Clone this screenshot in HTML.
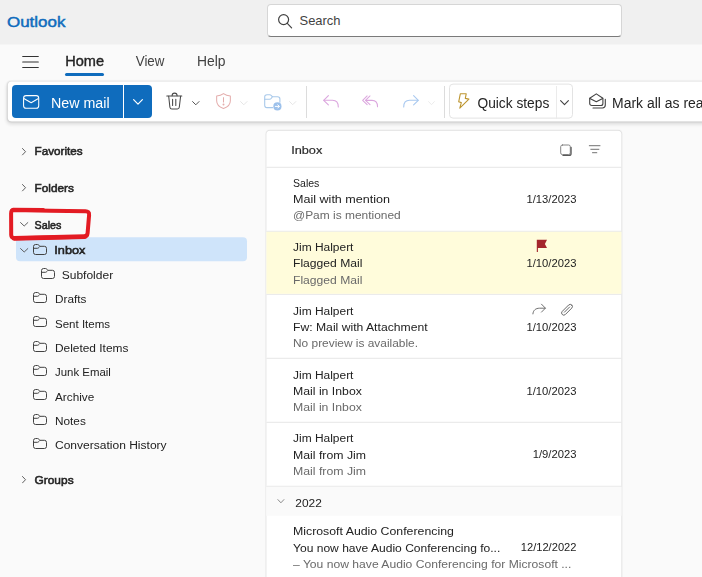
<!DOCTYPE html>
<html lang="en">
<head>
<meta charset="utf-8">
<title>Outlook</title>
<style>
*{box-sizing:border-box;margin:0;padding:0}
html,body{width:702px;height:577px;overflow:hidden;background:#fafafa}
body{position:relative;font-family:"Liberation Sans",sans-serif;color:#242424;font-size:13px}
#all{position:absolute;left:0;top:0;width:702px;height:577px;overflow:hidden;opacity:.999}
.abs{position:absolute}
.t{position:absolute;white-space:nowrap;line-height:16px;transform-origin:0 0}
#hdr{left:0;top:0;width:702px;height:44px;background:#f0f0f0}

#search{left:267px;top:4px;width:355px;height:33px;background:#fff;border:1px solid #d6d6d6;border-bottom:1px solid #7a7a7a;border-radius:4px}
#ribbon{left:8px;top:81px;width:720px;height:40px;background:#fff;border-radius:4px;box-shadow:0 2px 4px rgba(0,0,0,.15),0 0 2px rgba(0,0,0,.12);transform:translate(-0.2px,0.55px)}
#newmail{left:12px;top:85px;width:111px;height:33px;background:#0f6cbd;border-radius:4px 0 0 4px}
#newmail2{left:124px;top:85px;width:28px;height:33px;background:#0f6cbd;border-radius:0 4px 4px 0}
.sep{position:absolute;width:1px;background:#dcdcdc}
#qs{left:449px;top:84px;width:124px;height:35px;transform:translateY(-0.4px);border:1px solid #e3e3e3;border-radius:4px;background:#fff}
.nav{font-size:13px;color:#242424}
.navb{font-size:13px;font-weight:bold;color:#242424}
#sel{left:16px;top:237px;width:231px;height:24px;transform:translateY(0.3px);background:#cfe4fa;border-radius:4px}
#list{left:266px;top:131px;width:355px;height:460px;background:#fff;border-radius:3.5px 3.5px 0 0;box-shadow:0 0 0 1px rgba(0,0,0,.055),0 0 2px rgba(0,0,0,.08);transform:translate(0.4px,-0.2px)}
.hl{position:absolute;left:0;width:355px;height:1px;background:#e6e6e6}
.m1{font-size:13px;color:#242424}
.m3{font-size:13px;color:#6b6b6b}
.dt{font-size:12px;color:#242424}
svg{position:absolute;overflow:visible}
</style>
</head>
<body>
<div id="all">
<!-- header -->
<div id="hdr" class="abs"></div>
<div class="t" id="brand" style="left:7px;top:14px;font-size:16px;color:#0f6cbd;-webkit-text-stroke:0.5px #0f6cbd;transform:translate(0.0px,0.64px) scale(1.0598,0.92)">Outlook</div>
<div class="abs" style="left:0;top:44px;width:702px;height:1px;background:#f5f5f5"></div>
<div id="search" class="abs"></div>
<svg style="left:276.6px;top:12.7px" width="16" height="16" viewBox="0 0 16 16" fill="none" stroke="#424242" stroke-width="1.2" stroke-linecap="round"><circle cx="6.6" cy="6.6" r="5"/><path d="M10.3 10.3 L14.6 14.8"/></svg>
<div class="t" id="tSearch" style="left:299px;top:13px;font-size:13.5px;color:#424242;transform:translate(0.5px,0.25px) scale(0.9582,1)">Search</div>

<!-- tabs -->
<svg style="left:21.6px;top:55.3px" width="17" height="14" viewBox="0 0 17 14" fill="none" stroke="#333" stroke-width="1.1" stroke-linecap="round"><path d="M0.7 1.5H16.3M0.7 7H16.3M0.7 12.5H16.3"/></svg>
<div class="t" id="tHome" style="left:65px;top:53px;font-size:14px;color:#242424;-webkit-text-stroke:0.38px #242424;transform:translate(0.21px,0px) scale(1.0394,1)">Home</div>
<div class="abs" style="left:65.2px;top:73.2px;width:39.2px;height:3px;background:#0f6cbd;border-radius:1.5px"></div>
<div class="t" id="tView" style="left:135px;top:53px;font-size:14px;color:#424242;transform:translate(0.75px,0px) scale(0.9522,1)">View</div>
<div class="t" id="tHelp" style="left:197px;top:53px;font-size:14px;color:#424242;transform:translate(0.01px,0px) scale(0.9908,1)">Help</div>

<!-- ribbon -->
<div id="ribbon" class="abs"></div>
<div id="newmail" class="abs"></div>
<div id="newmail2" class="abs"></div>
<svg style="left:23px;top:95.3px" width="16.3" height="13.8" viewBox="0 0 17 14" preserveAspectRatio="none" fill="none" stroke="#fff" stroke-width="1.1" stroke-linejoin="round"><rect x="0.6" y="0.6" width="15.8" height="12.8" rx="2.6"/><path d="M0.9 3.6 L8.5 7.8 L16.1 3.6"/></svg>
<div class="t" id="tNew" style="left:50px;top:94px;font-size:14px;color:#fff;transform:translate(0.98px,0.5px) scale(1.0185,1)">New mail</div>
<svg style="left:133.2px;top:99.2px" width="10" height="6" viewBox="0 0 10 6" fill="none" stroke="#fff" stroke-width="1.2" stroke-linecap="round" stroke-linejoin="round"><path d="M0.6 0.7 L5 5.1 L9.4 0.7"/></svg>

<!-- delete -->
<svg style="left:0;top:0" width="702" height="130" viewBox="0 0 702 130" fill="none" stroke="#484848" stroke-width="1.05" stroke-linecap="round" stroke-linejoin="round"><path d="M166.8 96H181.800"/><path d="M172.100 95.800A2.500 2.700 0 0 1 177.100 95.800"/><path d="M168.700 96.300L169.900 107.200Q170.100 108.900 171.900 108.900H177.300Q179.100 108.900 179.300 107.200L180.600 96.300"/><path d="M172.600 99.300V105.500M175.800 99.300V105.500"/></svg>
<svg style="left:191.5px;top:101.1px" width="7.6" height="4.750" viewBox="0 0 8 5" fill="none" stroke="#424242" stroke-width="0.95" stroke-linecap="round" stroke-linejoin="round"><path d="M0.6 0.6 L4 4 L7.4 0.6"/></svg>
<!-- report (shield) -->
<svg style="left:216.1px;top:93.3px" width="15" height="16.3" viewBox="0 0 16 18" preserveAspectRatio="none" fill="none" stroke="#e4adac" stroke-width="1.1" stroke-linecap="round" stroke-linejoin="round"><path d="M8 0.7C5.8 2.4 3.4 3.1 0.7 3.2V8.6C0.7 12.8 3.6 15.7 8 17.2C12.400 15.7 15.3 12.8 15.3 8.6V3.200C12.6 3.1 10.2 2.4 8 0.7Z"/><path d="M8 5V10"/><circle cx="8" cy="12.700" r="0.5" fill="#e4adac"/></svg>
<svg style="left:240.4px;top:101.1px" width="7.6" height="4.750" viewBox="0 0 8 5" fill="none" stroke="#e4e4e4" stroke-width="1" stroke-linecap="round" stroke-linejoin="round"><path d="M0.6 0.6 L4 4 L7.4 0.6"/></svg>
<!-- move to folder -->
<svg style="left:264px;top:94px" width="18" height="17" viewBox="0 0 18 17" fill="none" stroke="#a9c9ea" stroke-width="1.1" stroke-linecap="round" stroke-linejoin="round"><path d="M8.6 13.6H3C1.700 13.6 0.7 12.6 0.7 11.3V3C0.7 1.700 1.700 0.7 3 0.7H5.600C6.3 0.7 6.9 1 7.300 1.500L8.300 2.700H13.600C14.900 2.700 15.900 3.700 15.900 5V8.300"/><path d="M0.7 5.200H5.400C6.200 5.200 6.900 4.900 7.400 4.200L8.300 2.800"/><circle cx="13.400" cy="12.400" r="4.100" fill="#9dc1eb" stroke="none"/><path d="M11.300 12.400H15.200M13.800 10.800L15.400 12.400L13.800 14" stroke="#fff" stroke-width="1"/></svg>
<svg style="left:289.3px;top:101.1px" width="7.4" height="4.6" viewBox="0 0 8 5" fill="none" stroke="#e4e4e4" stroke-width="1" stroke-linecap="round" stroke-linejoin="round"><path d="M0.6 0.6 L4 4 L7.4 0.6"/></svg>
<div class="sep" style="left:306px;top:86px;height:32px"></div>
<!-- reply -->
<svg style="left:323px;top:95px" width="16" height="13" viewBox="0 0 16 13" fill="none" stroke="#dba6de" stroke-width="1.1" stroke-linecap="round" stroke-linejoin="round"><path d="M5.400 0.7L0.7 5.300L5.400 9.900"/><path d="M0.9 5.300H9.500C13 5.300 15.300 7.700 15.300 12"/></svg>
<!-- reply all -->
<svg style="left:362.4px;top:95px" width="16.2" height="13" viewBox="0 0 17 13" fill="none" stroke="#dba6de" stroke-width="1.1" stroke-linecap="round" stroke-linejoin="round"><path d="M5.400 0.7L0.7 5.300L5.400 9.900"/><path d="M8.400 0.7L3.700 5.300L8.400 9.900"/><path d="M3.900 5.300H10.500C14 5.300 16.300 7.700 16.300 12"/></svg>
<!-- forward -->
<svg style="left:403px;top:95px" width="16" height="13" viewBox="0 0 16 13" fill="none" stroke="#a9c9f0" stroke-width="1.1" stroke-linecap="round" stroke-linejoin="round"><path d="M10.600 0.7L15.300 5.300L10.600 9.900"/><path d="M15.100 5.300H6.500C3 5.300 0.7 7.700 0.7 12"/></svg>
<svg style="left:428.2px;top:100.9px" width="7" height="5" viewBox="0 0 7 5" fill="none" stroke="#ececec" stroke-width="1" stroke-linecap="round" stroke-linejoin="round"><path d="M0.6 0.6 L3.500 3.700 L6.400 0.6"/></svg>
<div class="sep" style="left:444px;top:86px;height:32px"></div>
<!-- quick steps -->
<div id="qs" class="abs"></div>
<div class="sep" style="left:556px;top:85.5px;height:33px;background:#ebebeb"></div>
<svg style="left:0;top:0" width="702" height="130" viewBox="0 0 702 130" fill="none" stroke="#bd952f" stroke-width="1.1" stroke-linecap="round" stroke-linejoin="round"><path d="M460.3 93.800H466.200L465.300 98.400L468.900 99.100L459.800 108.200L461.300 102.600L458.700 101.800Z"/></svg>
<div class="t" id="tQS" style="left:477px;top:94px;font-size:14px;color:#242424;transform:translate(0.5px,0.5px) scale(0.9810,1)">Quick steps</div>
<svg style="left:559.8px;top:100.2px" width="9" height="6" viewBox="0 0 9 6" fill="none" stroke="#424242" stroke-width="1.1" stroke-linecap="round" stroke-linejoin="round"><path d="M0.6 0.6 L4.500 4.600 L8.400 0.6"/></svg>
<!-- mark all as read -->
<svg style="left:589px;top:93px" width="18" height="16" viewBox="0 0 18 16" fill="none" stroke="#424242" stroke-width="1.1" stroke-linecap="round" stroke-linejoin="round"><path d="M0.7 5.200L7.300 0.900L13.900 5.200V10.500C13.900 11.600 13 12.500 11.900 12.500H2.700C1.600 12.500 0.7 11.600 0.7 10.500Z"/><path d="M0.9 5.400L7.300 8.800L13.700 5.400"/><path d="M16.300 6.200V12.100C16.300 13.700 15 15 13.400 15H4"/></svg>
<div class="t" id="tMark" style="left:612px;top:94px;font-size:14px;color:#242424;transform:translate(0.1px,0.5px) scale(0.9960,1)">Mark all as read</div>

<!-- left nav -->
<div id="sel" class="abs"></div>
<svg class="chev-r" style="left:22.4px;top:147.6px" width="4.1" height="7.4" viewBox="0 0 5 9" fill="none" stroke="#555" stroke-width="1.15" stroke-linecap="round" stroke-linejoin="round"><path d="M0.6 0.6L4.300 4.500L0.6 8.400"/></svg>
<div class="t navb" id="nFav" style="left:34px;top:143px;font-size:11.7px;font-weight:normal;color:#242424;-webkit-text-stroke:0.55px #242424;transform:translate(0.5px,0.25px) scale(1.0017,1)">Favorites</div>
<svg class="chev-r" style="left:22.4px;top:184.4px" width="4.1" height="7.4" viewBox="0 0 5 9" fill="none" stroke="#555" stroke-width="1.15" stroke-linecap="round" stroke-linejoin="round"><path d="M0.6 0.6L4.300 4.500L0.6 8.400"/></svg>
<div class="t navb" id="nFold" style="left:34px;top:180px;font-size:11.7px;font-weight:normal;color:#242424;-webkit-text-stroke:0.55px #242424;transform:translate(0.5px,0px) scale(1.0095,1)">Folders</div>
<svg style="left:20.2px;top:221.7px" width="8.4" height="4.7" viewBox="0 0 9 5" fill="none" stroke="#555" stroke-width="1" stroke-linecap="round" stroke-linejoin="round"><path d="M0.6 0.6L4.500 4.300L8.400 0.6"/></svg>
<div class="t navb" id="nSales" style="left:34px;top:216px;font-size:11.7px;font-weight:normal;color:#242424;-webkit-text-stroke:0.55px #242424;transform:translate(0.5px,0.5px) scale(0.9186,1)">Sales</div>
<svg style="left:0;top:200px" width="100" height="48" viewBox="0 200 100 48" fill="none" stroke="#e31b23" stroke-width="4" stroke-linejoin="round" stroke-linecap="round"><path d="M13.6 210.100L50 210.800L85.500 211.300Q89.400 211.300 89.100 215L87.600 233Q87.300 236.500 84 236.700L15 238.200Q11.300 238.300 11.200 235L11.100 213.500Q11.100 210.100 13.600 210.100Z"/><path d="M13 209.400L43.400 209.500" stroke-width="3.2"/><path d="M14 238.300L84.500 236.700" stroke-width="4.800"/></svg>
<svg style="left:20.2px;top:247.8px" width="8.4" height="4.7" viewBox="0 0 9 5" fill="none" stroke="#555" stroke-width="1" stroke-linecap="round" stroke-linejoin="round"><path d="M0.6 0.6L4.500 4.300L8.400 0.6"/></svg>
<div class="t navb" id="nInbox" style="left:54px;top:242px;font-size:11.7px;font-weight:normal;color:#242424;-webkit-text-stroke:0.55px #242424;transform:translate(0.31px,0px) scale(1.0884,1)">Inbox</div>
<div class="t nav" id="nSub" style="left:61px;top:266px;font-size:11.7px;color:#222;transform:translate(0.75px,0.5px) scale(1.0271,1)">Subfolder</div>
<div class="t nav" id="nDrafts" style="left:55px;top:291px;font-size:11.7px;color:#222;transform:translate(0.0px,0px) scale(1.0055,1)">Drafts</div>
<div class="t nav" id="nSent" style="left:55px;top:315px;font-size:11.7px;color:#222;transform:translate(0.0px,0.5px) scale(0.9863,1)">Sent Items</div>
<div class="t nav" id="nDel" style="left:55px;top:339px;font-size:11.7px;color:#222;transform:translate(0.0px,0.75px) scale(1.0171,1)">Deleted Items</div>
<div class="t nav" id="nJunk" style="left:55px;top:364px;font-size:11.7px;color:#222;transform:translate(0.0px,0.25px) scale(0.9768,1)">Junk Email</div>
<div class="t nav" id="nArch" style="left:55px;top:388px;font-size:11.7px;color:#222;transform:translate(0.0px,0.5px) scale(1.0072,1)">Archive</div>
<div class="t nav" id="nNotes" style="left:55px;top:412px;font-size:11.7px;color:#222;transform:translate(0.0px,0.5px) scale(1.0102,1)">Notes</div>
<div class="t nav" id="nConv" style="left:55px;top:437px;font-size:11.7px;color:#222;transform:translate(0.0px,0px) scale(1.0287,1)">Conversation History</div>
<svg class="chev-r" style="left:22.4px;top:476.2px" width="4.1" height="7.4" viewBox="0 0 5 9" fill="none" stroke="#555" stroke-width="1.15" stroke-linecap="round" stroke-linejoin="round"><path d="M0.6 0.6L4.300 4.500L0.6 8.400"/></svg>
<div class="t navb" id="nGroups" style="left:34px;top:471px;font-size:11.7px;font-weight:normal;color:#242424;-webkit-text-stroke:0.55px #242424;transform:translate(0.5px,0.75px) scale(1.0199,1)">Groups</div>

<!-- folder icons -->
<svg style="left:33.1px;top:243.8px" width="14" height="11" viewBox="0 0 14 11" fill="none" stroke="#424242" stroke-width="1" stroke-linejoin="round"><path d="M0.5 2.6A2.1 2.1 0 0 1 2.6 0.5H4.4C5 0.5 5.5 0.7 5.9 1.2L6.9 2.3H11.4A2.1 2.1 0 0 1 13.5 4.400V8.400A2.1 2.1 0 0 1 11.4 10.5H2.6A2.1 2.1 0 0 1 0.5 8.400Z"/><path d="M0.5 4.300H4.400C5 4.300 5.5 4 5.900 3.500L6.900 2.300"/></svg>
<svg style="left:40.6px;top:267.9px" width="14" height="11" viewBox="0 0 14 11" fill="none" stroke="#424242" stroke-width="1" stroke-linejoin="round"><path d="M0.5 2.6A2.1 2.1 0 0 1 2.6 0.5H4.4C5 0.5 5.5 0.7 5.9 1.2L6.9 2.3H11.4A2.1 2.1 0 0 1 13.5 4.400V8.400A2.1 2.1 0 0 1 11.4 10.5H2.6A2.1 2.1 0 0 1 0.5 8.400Z"/><path d="M0.5 4.300H4.400C5 4.300 5.5 4 5.900 3.500L6.900 2.300"/></svg>
<svg style="left:33.1px;top:292px" width="14" height="11" viewBox="0 0 14 11" fill="none" stroke="#424242" stroke-width="1" stroke-linejoin="round"><path d="M0.5 2.6A2.1 2.1 0 0 1 2.6 0.5H4.4C5 0.5 5.5 0.7 5.9 1.2L6.9 2.3H11.4A2.1 2.1 0 0 1 13.5 4.400V8.400A2.1 2.1 0 0 1 11.4 10.5H2.6A2.1 2.1 0 0 1 0.5 8.400Z"/><path d="M0.5 4.300H4.400C5 4.300 5.5 4 5.900 3.500L6.900 2.300"/></svg>
<svg style="left:33.1px;top:316.3px" width="14" height="11" viewBox="0 0 14 11" fill="none" stroke="#424242" stroke-width="1" stroke-linejoin="round"><path d="M0.5 2.6A2.1 2.1 0 0 1 2.6 0.5H4.4C5 0.5 5.5 0.7 5.9 1.2L6.9 2.3H11.4A2.1 2.1 0 0 1 13.5 4.400V8.400A2.1 2.1 0 0 1 11.4 10.5H2.6A2.1 2.1 0 0 1 0.5 8.400Z"/><path d="M0.5 4.300H4.400C5 4.300 5.5 4 5.900 3.500L6.900 2.300"/></svg>
<svg style="left:33.1px;top:340.7px" width="14" height="11" viewBox="0 0 14 11" fill="none" stroke="#424242" stroke-width="1" stroke-linejoin="round"><path d="M0.5 2.6A2.1 2.1 0 0 1 2.6 0.5H4.4C5 0.5 5.5 0.7 5.9 1.2L6.9 2.3H11.4A2.1 2.1 0 0 1 13.5 4.400V8.400A2.1 2.1 0 0 1 11.4 10.5H2.6A2.1 2.1 0 0 1 0.5 8.400Z"/><path d="M0.5 4.300H4.400C5 4.300 5.5 4 5.900 3.500L6.900 2.300"/></svg>
<svg style="left:33.1px;top:365px" width="14" height="11" viewBox="0 0 14 11" fill="none" stroke="#424242" stroke-width="1" stroke-linejoin="round"><path d="M0.5 2.6A2.1 2.1 0 0 1 2.6 0.5H4.4C5 0.5 5.5 0.7 5.9 1.2L6.9 2.3H11.4A2.1 2.1 0 0 1 13.5 4.400V8.400A2.1 2.1 0 0 1 11.4 10.5H2.6A2.1 2.1 0 0 1 0.5 8.400Z"/><path d="M0.5 4.300H4.400C5 4.300 5.5 4 5.900 3.500L6.900 2.300"/></svg>
<svg style="left:33.1px;top:389.4px" width="14" height="11" viewBox="0 0 14 11" fill="none" stroke="#424242" stroke-width="1" stroke-linejoin="round"><path d="M0.5 2.6A2.1 2.1 0 0 1 2.6 0.5H4.4C5 0.5 5.5 0.7 5.9 1.2L6.9 2.3H11.4A2.1 2.1 0 0 1 13.5 4.400V8.400A2.1 2.1 0 0 1 11.4 10.5H2.6A2.1 2.1 0 0 1 0.5 8.400Z"/><path d="M0.5 4.300H4.400C5 4.300 5.5 4 5.900 3.500L6.900 2.300"/></svg>
<svg style="left:33.1px;top:413.6px" width="14" height="11" viewBox="0 0 14 11" fill="none" stroke="#424242" stroke-width="1" stroke-linejoin="round"><path d="M0.5 2.6A2.1 2.1 0 0 1 2.6 0.5H4.4C5 0.5 5.5 0.7 5.9 1.2L6.9 2.3H11.4A2.1 2.1 0 0 1 13.5 4.400V8.400A2.1 2.1 0 0 1 11.4 10.5H2.6A2.1 2.1 0 0 1 0.5 8.400Z"/><path d="M0.5 4.300H4.400C5 4.300 5.5 4 5.900 3.500L6.900 2.300"/></svg>
<svg style="left:33.1px;top:438px" width="14" height="11" viewBox="0 0 14 11" fill="none" stroke="#424242" stroke-width="1" stroke-linejoin="round"><path d="M0.5 2.6A2.1 2.1 0 0 1 2.6 0.5H4.4C5 0.5 5.5 0.7 5.9 1.2L6.9 2.3H11.4A2.1 2.1 0 0 1 13.5 4.400V8.400A2.1 2.1 0 0 1 11.4 10.5H2.6A2.1 2.1 0 0 1 0.5 8.400Z"/><path d="M0.5 4.300H4.400C5 4.300 5.5 4 5.900 3.500L6.900 2.300"/></svg>

<!-- message list -->
<div id="list" class="abs"><i class="hl" style="top:36px"></i><i class="hl" style="top:100px"></i><i class="hl" style="top:163px"></i><i class="hl" style="top:227px"></i><i class="hl" style="top:291px"></i><i class="hl" style="top:355px"></i><i class="abs" style="left:0;top:101px;width:355px;height:62px;background:#fffcdb"></i><i class="abs" style="left:0;top:356px;width:355px;height:29px;background:#fafafa"></i></div>

<div class="t" id="lInbox" style="left:291px;top:141px;font-size:11.7px;color:#2b2b2b;-webkit-text-stroke:0.2px #2b2b2b;transform:translate(0.16px,0.75px) scale(1.0902,1)">Inbox</div>

<div class="t m1" id="a1" style="left:293px;top:175px;font-size:11.7px;color:#222;transform:translate(0.0px,0px) scale(0.9016,1)">Sales</div>
<div class="t m1" id="a2" style="left:293px;top:191px;font-size:11.7px;color:#222;transform:translate(0.0px,0px) scale(1.0748,1)">Mail with mention</div>
<div class="t m3" id="a3" style="left:293px;top:207px;font-size:11.7px;color:#6a6a6a;transform:translate(0.0px,0.25px) scale(1.0223,1)">@Pam is mentioned</div>
<div class="t dt" id="a4" style="left:526px;top:191px;font-size:11.7px;color:#222;transform:translate(0.5px,0px) scale(0.9613,1)">1/13/2023</div>

<div class="t m1" id="b1" style="left:293px;top:238px;font-size:11.7px;color:#222;transform:translate(0.0px,0.75px) scale(1.0225,1)">Jim Halpert</div>
<div class="t m1" id="b2" style="left:293px;top:255px;font-size:11.7px;color:#222;transform:translate(0.0px,0px) scale(1.0367,1)">Flagged Mail</div>
<div class="t m3" id="b3" style="left:293px;top:271px;font-size:11.7px;color:#6a6a6a;transform:translate(0.0px,0.5px) scale(1.0367,1)">Flagged Mail</div>
<div class="t dt" id="b4" style="left:526px;top:255px;font-size:11.7px;color:#222;transform:translate(0.5px,0px) scale(0.9613,1)">1/10/2023</div>

<div class="t m1" id="c1" style="left:293px;top:303px;font-size:11.7px;color:#222;transform:translate(0.0px,0px) scale(1.0225,1)">Jim Halpert</div>
<div class="t m1" id="c2" style="left:293px;top:319px;font-size:11.7px;color:#222;transform:translate(0.0px,0px) scale(1.0409,1)">Fw: Mail with Attachment</div>
<div class="t m3" id="c3" style="left:293px;top:335px;font-size:11.7px;color:#6a6a6a;transform:translate(0.0px,0.25px) scale(1.0181,1)">No preview is available.</div>
<div class="t dt" id="c4" style="left:526px;top:318px;font-size:11.7px;color:#222;transform:translate(0.5px,0.5px) scale(0.9613,1)">1/10/2023</div>

<div class="t m1" id="d1" style="left:293px;top:366px;font-size:11.7px;color:#222;transform:translate(0.0px,0.75px) scale(1.0225,1)">Jim Halpert</div>
<div class="t m1" id="d2" style="left:293px;top:383px;font-size:11.7px;color:#222;transform:translate(0.0px,0px) scale(1.0492,1)">Mail in Inbox</div>
<div class="t m3" id="d3" style="left:293px;top:399px;font-size:11.7px;color:#6a6a6a;transform:translate(0.0px,0px) scale(1.0492,1)">Mail in Inbox</div>
<div class="t dt" id="d4" style="left:526px;top:382px;font-size:11.7px;color:#222;transform:translate(0.5px,0.75px) scale(0.9613,1)">1/10/2023</div>

<div class="t m1" id="e1" style="left:293px;top:430px;font-size:11.7px;color:#222;transform:translate(0.0px,0.25px) scale(1.0225,1)">Jim Halpert</div>
<div class="t m1" id="e2" style="left:293px;top:446px;font-size:11.7px;color:#222;transform:translate(0.0px,0.5px) scale(1.0511,1)">Mail from Jim</div>
<div class="t m3" id="e3" style="left:293px;top:463px;font-size:11.7px;color:#6a6a6a;transform:translate(0.0px,0px) scale(1.0511,1)">Mail from Jim</div>
<div class="t dt" id="e4" style="left:532px;top:446px;font-size:11.7px;color:#222;transform:translate(0.75px,0.25px) scale(0.9612,1)">1/9/2023</div>

<div class="t m1" id="g1" style="left:295px;top:494px;font-size:11.7px;color:#222;transform:translate(0.25px,0.5px) scale(1.0196,1)">2022</div>

<div class="t m1" id="f1" style="left:293px;top:523px;font-size:11.7px;color:#222;transform:translate(0.0px,0px) scale(1.0536,1)">Microsoft Audio Conferencing</div>
<div class="t m1" id="f2" style="left:293px;top:539px;font-size:11.7px;color:#222;transform:translate(0.0px,0.5px) scale(1.0313,1)">You now have Audio Conferencing fo...</div>
<div class="t m3" id="f3" style="left:293px;top:555px;font-size:11.7px;color:#6a6a6a;transform:translate(0.0px,0.5px) scale(1.0374,1)">– You now have Audio Conferencing for Microsoft ...</div>
<div class="t dt" id="f4" style="left:520px;top:539px;font-size:11.7px;color:#222;transform:translate(0.75px,0.25px) scale(0.9527,1)">12/12/2022</div>
<!-- list icons -->
<svg style="left:0;top:0" width="702" height="577" viewBox="0 0 702 577" fill="none" stroke="#616161" stroke-width="1" stroke-linecap="round" stroke-linejoin="round">
<rect x="560.7" y="145" width="9.600" height="9.600" rx="1.7" stroke="#787878" stroke-width="0.9"/>
<path d="M571.1 147.300V153.400Q571.100 155.400 569.100 155.400H563" stroke-width="1.2" stroke="#5a5a5a"/>
<path d="M589.3 145.700H600M590.800 149.300H598.900M592.500 152.700H596.800" stroke="#6a6a6a" stroke-width="0.95"/>
<path d="M536.8 239.800H547L544.900 243.900L547 248.100H537.900V251.900H536.800Z" fill="#a4262c" stroke="none"/>
<path d="M541.5 304.200L545.400 308.150L541.500 312.100M545.200 308.200H539.600C535.600 308.200 533.100 310.400 532.900 313.900" stroke-width="0.9"/>
<g transform="translate(567 309.750) rotate(45)" stroke-width="0.9"><rect x="-2.200" y="-6.700" width="4.400" height="13.400" rx="2.200"/><path d="M-0.100 -3.800V3.600"/></g>
<path d="M277.9 499.600L280.900 502.800L283.900 499.600" stroke="#8a8a8a"/>
</svg>
</div>
</body>
</html>
